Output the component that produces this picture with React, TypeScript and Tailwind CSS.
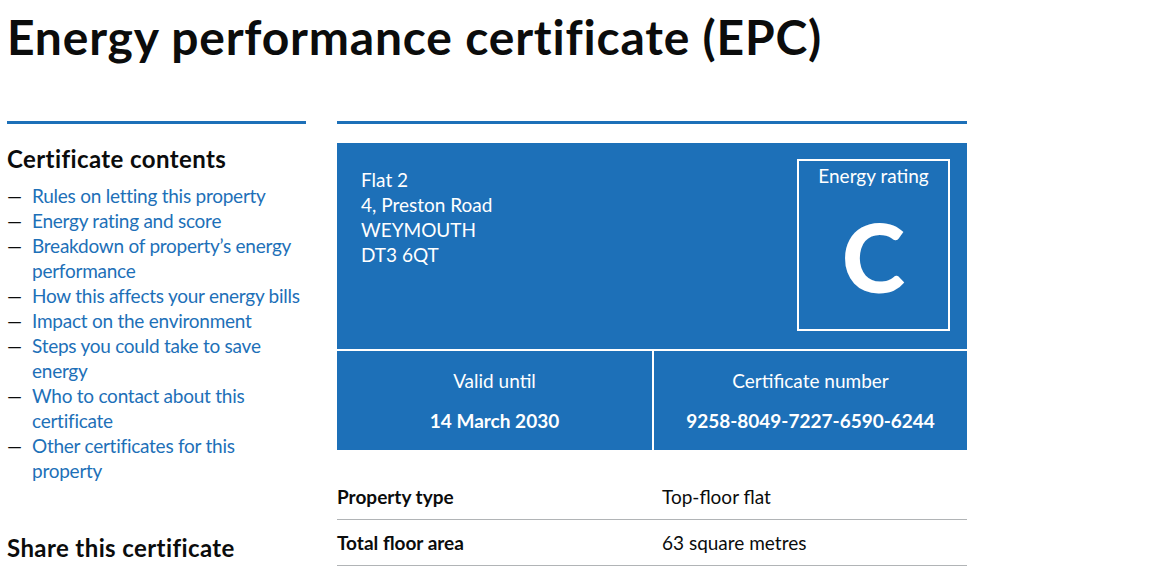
import React from "react";

const contents = [
    "Rules on letting this property",
    "Energy rating and score",
    "Breakdown of property’s energy performance",
    "How this affects your energy bills",
    "Impact on the environment",
    "Steps you could take to save energy",
    "Who to contact about this certificate",
    "Other certificates for this property",
];

const summary = [
    { label: "Property type", value: "Top-floor flat" },
    { label: "Total floor area", value: "63 square metres" },
];

export default function App() {
    return (
        <div className="min-h-screen bg-white text-[#0b0c0c] px-[7px] font-['Lato','Liberation_Sans',sans-serif]">
            {/* title */}
            <h1 className="text-[48px] leading-[50px] font-bold pt-[12px] tracking-[0.8px]">
                Energy performance certificate (EPC)
            </h1>

            <div className="flex gap-[31px] mt-[59px]">
                {/* sidebar */}
                <aside className="w-[299px] shrink-0 border-t-[3px] border-[#1d70b8]">
                    <h2 className="text-[24px] leading-[30px] font-bold mt-[20px] tracking-[0.4px]">Certificate contents</h2>
                    <ul className="mt-[9px] text-[19px] leading-[25px] tracking-[-0.25px]">
                        {contents.map((item) => (
                            <li key={item} className="flex">
                                <span className="w-[25px] shrink-0">—</span>
                                <a href="#" className="text-[#1d70b8]">{item}</a>
                            </li>
                        ))}
                    </ul>
                    <h2 className="text-[24px] leading-[30px] font-bold mt-[50px] tracking-[0.4px]">Share this certificate</h2>
                </aside>

                {/* certificate */}
                <main className="w-[630px] shrink-0 border-t-[3px] border-[#1d70b8]">
                    <div className="mt-[19px] bg-[#1d70b8] text-white">
                        <div className="flex justify-between pl-[24px] pr-[17px] pt-[16px] pb-[18px]">
                            <div className="text-[19px] leading-[25px] pt-[8px]">
                                <p>Flat 2</p>
                                <p>4, Preston Road</p>
                                <p>WEYMOUTH</p>
                                <p>DT3 6QT</p>
                            </div>
                            <div className="w-[153px] h-[172px] border-2 border-white flex flex-col items-center">
                                <p className="text-[19px] leading-[25px] mt-[2px]">Energy rating</p>
                                <p className="text-[96px] leading-[96px] font-black mt-[20px]">C</p>
                            </div>
                        </div>
                        <div className="grid grid-cols-2 border-t-2 border-white">
                            <div className="text-center py-[17px] text-[19px] leading-[25px]">
                                <p>Valid until</p>
                                <p className="font-bold mt-[15px]">14 March 2030</p>
                            </div>
                            <div className="text-center py-[17px] text-[19px] leading-[25px] border-l-2 border-white">
                                <p>Certificate number</p>
                                <p className="font-bold mt-[15px]">9258-8049-7227-6590-6244</p>
                            </div>
                        </div>
                    </div>

                    <dl className="mt-[24px] text-[19px] leading-[25px]">
                        {summary.map((row) => (
                            <div key={row.label} className="flex py-[10px] border-b border-[#b1b4b6]">
                                <dt className="w-[325px] font-bold">{row.label}</dt>
                                <dd>{row.value}</dd>
                            </div>
                        ))}
                    </dl>
                </main>
            </div>
        </div>
    );
}
